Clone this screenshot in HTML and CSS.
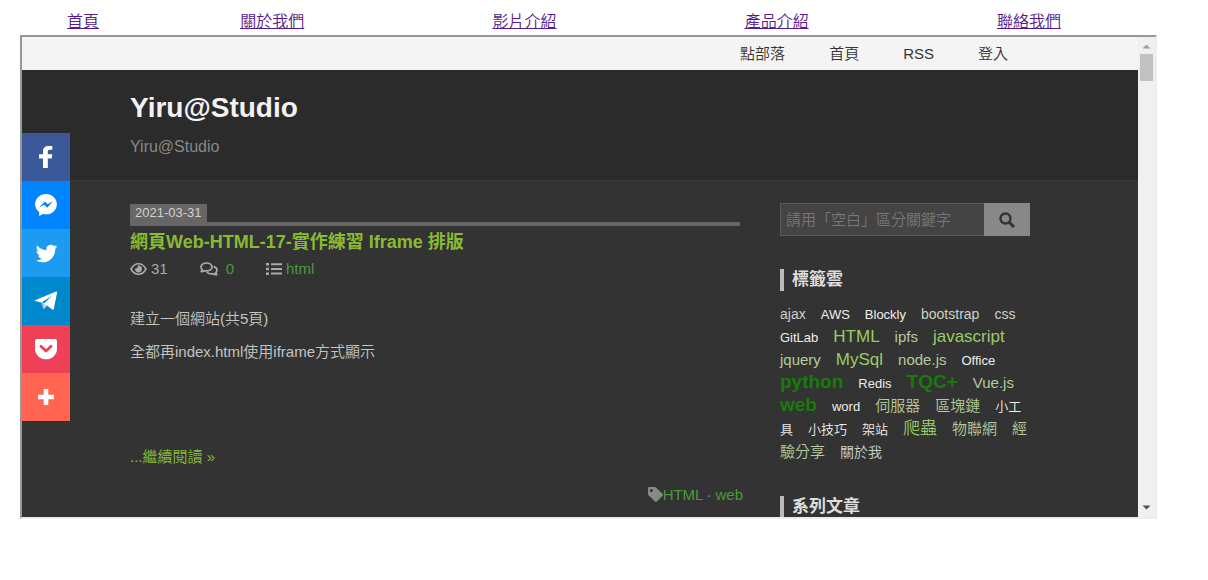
FILE: index.html
```html
<!DOCTYPE html>
<html lang="zh-Hant">
<head>
<meta charset="utf-8">
<meta name="viewport" content="width=device-width, initial-scale=1">
<title>Yiru@Studio</title>
<link rel="stylesheet" href="styles.css">
</head>
<body>
<nav class="site-nav">
  <a href="#">首頁</a>
  <a href="#">關於我們</a>
  <a href="#">影片介紹</a>
  <a href="#">產品介紹</a>
  <a href="#">聯絡我們</a>
</nav>

<div class="frame">
  <div class="page">
    <div class="topbar">
      <nav class="container topbar-links">
        <a href="#">點部落</a>
        <a href="#">首頁</a>
        <a href="#">RSS</a>
        <a href="#">登入</a>
      </nav>
    </div>

    <header class="banner">
      <div class="container">
        <h1 class="banner-title"><a href="#">Yiru@Studio</a></h1>
        <p class="banner-tagline">Yiru@Studio</p>
      </div>
    </header>

    <div class="container columns">
      <article class="post">
        <div class="post-date"><time datetime="2021-03-31">2021-03-31</time></div>
        <h2 class="post-title"><a href="#">網頁Web-HTML-17-實作練習 Iframe 排版</a></h2>
        <div class="post-meta">
          <span class="meta-item">
            <svg width="17" height="14" viewBox="0 0 17 14" fill="none" stroke="currentColor" stroke-width="1.600"><path d="M1 7C3 3.300 5.500 1.700 8.500 1.700S14 3.300 16 7C14 10.700 11.500 12.300 8.500 12.300S3 10.700 1 7z"/><path d="M8.500 3.500a3.500 3.500 0 1 1-3.400 2.700c.8.500 1.900.3 2.300-.4.400-.7.300-1.500-.1-2.100z" fill="currentColor" stroke="none"/></svg>
            31
          </span>
          <span class="meta-item meta-comments">
            <svg width="18" height="14" viewBox="0 0 18 14" fill="none" stroke="currentColor" stroke-width="1.700" stroke-linejoin="round"><path d="M6.500 1C3.400 1 1 2.600 1 4.900c0 1 .5 1.900 1.200 2.600L1.200 9.600c1.300 0 2.500-.4 3.300-1 .6.100 1.300.2 2 .2 3.100 0 5.500-1.600 5.500-3.900S9.600 1 6.500 1z"/><path d="M13.500 4.600c2.100.5 3.500 1.800 3.500 3.400 0 1-.5 1.900-1.200 2.600l1 2.100c-1.300 0-2.500-.4-3.300-1-.6.100-1.300.2-2 .2-2 0-3.700-.7-4.700-1.800"/></svg>
            <a href="#">0</a>
          </span>
          <span class="meta-item">
            <svg width="16" height="14" viewBox="0 0 16 14" fill="currentColor"><path d="M0 1h3v2.500H0zM0 5.700h3v2.500H0zM0 10.400h3v2.500H0zM5 1.200h11v2H5zM5 5.900h11v2H5zM5 10.600h11v2H5z"/></svg>
            <a href="#">html</a>
          </span>
        </div>
        <div class="post-body">
          <p>建立一個網站(共5頁)</p>
          <p>全都再index.html使用iframe方式顯示</p>
        </div>
        <a class="read-more" href="#">...繼續閱讀 »</a>
        <div class="post-tags">
          <svg width="15" height="15" viewBox="0 0 15 15" fill="currentColor"><path fill-rule="evenodd" d="M0 1.400C0 .6.600 0 1.400 0h5.400c.5 0 .9.200 1.200.5l6.500 6.300c.6.600.6 1.400 0 2l-5.600 5.700c-.6.600-1.400.6-2 0L.5 8.200C.2 7.900 0 7.500 0 7zM3.400 2a1.500 1.500 0 1 0 0 3 1.500 1.500 0 0 0 0-3z"/></svg>
          <a href="#">HTML</a><span class="dot">·</span><a href="#">web</a>
        </div>
      </article>

      <aside class="sidebar">
        <form class="search">
          <input class="search-input" type="text" aria-label="搜尋" placeholder="請用「空白」區分關鍵字">
          <button class="search-button" type="button" aria-label="搜尋">
            <svg width="16" height="16" viewBox="0 0 16 16" fill="none" stroke="currentColor"><circle cx="6.500" cy="6.500" r="5" stroke-width="2.400"/><path d="M10.300 10.300 15 15" stroke-width="3"/></svg>
          </button>
        </form>
        <h3 class="side-title">標籤雲</h3>
        <div class="cloud">
          <a class="t2" href="#">ajax</a><a class="t1" href="#">AWS</a><a class="t1" href="#">Blockly</a><a class="t2" href="#">bootstrap</a><a class="t2" href="#">css</a><wbr><a class="t1" href="#">GitLab</a><a class="t4" href="#">HTML</a><a class="t3" href="#">ipfs</a><a class="t4" href="#">javascript</a><wbr><a class="t3" href="#">jquery</a><a class="t4" href="#">MySql</a><a class="t3" href="#">node.js</a><a class="t1" href="#">Office</a><wbr><a class="t5" href="#">python</a><a class="t1" href="#">Redis</a><a class="t5" href="#">TQC+</a><a class="t3" href="#">Vue.js</a><wbr><a class="t5" href="#">web</a><a class="t1" href="#">word</a><a class="t3" href="#">伺服器</a><a class="t3" href="#">區塊鏈</a><a class="t1" href="#">小工具</a><a class="t1" href="#">小技巧</a><a class="t1" href="#">架站</a><a class="t4" href="#">爬蟲</a><a class="t3" href="#">物聯網</a><a class="t3" href="#">經驗分享</a><a class="t2" href="#">關於我</a>
        </div>
        <h3 class="side-title">系列文章</h3>
      </aside>
    </div>
  </div>

  <div class="scrollbar" aria-hidden="true">
    <svg class="scroll-arrow" width="9" height="5" viewBox="0 0 9 5" fill="#a0a0a0"><path d="M0.500 4.500 4.500 0.500 8.500 4.500z"/></svg>
    <div class="scroll-track"><div class="scroll-thumb"></div></div>
    <svg class="scroll-arrow" width="9" height="5" viewBox="0 0 9 5" fill="#505050"><path d="M0.500 0.500 4.500 4.500 8.500 0.500z"/></svg>
  </div>

  <div class="share">
    <a class="facebook" href="#" aria-label="Facebook"><svg width="32" height="32" viewBox="0 0 32 32" fill="#fff"><path d="M17.800 27V17.400h3.900l.6-4.200h-4.500v-2.400c0-1.300.6-2 2-2h2.500V5h-3.600c-3.700 0-5.700 2-5.700 5.300v2.900H9v4.200h4V27z"/></svg></a>
    <a class="messenger" href="#" aria-label="Messenger"><svg width="32" height="32" viewBox="0 0 32 32" fill="#fff"><path d="M16 5C9.986 5 5.110 9.560 5.110 15.182c0 3.200 1.580 6.054 4.046 7.920V27l3.716-2.060c.99.276 2.040.425 3.128.425 6.014 0 10.890-4.560 10.890-10.183S22.013 5 16 5zm1.147 13.655L14.330 15.730l-5.423 3 5.946-6.310 2.816 2.925 5.420-3-5.940 6.310z"/></svg></a>
    <a class="twitter" href="#" aria-label="Twitter"><svg width="29" height="29" viewBox="0 0 32 32" fill="#fff"><path d="M28 8.557a9.913 9.913 0 0 1-2.828.775 4.930 4.930 0 0 0 2.166-2.725 9.738 9.738 0 0 1-3.130 1.194 4.920 4.920 0 0 0-3.593-1.550 4.924 4.924 0 0 0-4.794 6.049c-4.090-.21-7.720-2.170-10.150-5.150a4.942 4.942 0 0 0-.665 2.477c0 1.710.87 3.214 2.190 4.100a4.968 4.968 0 0 1-2.230-.616v.06c0 2.390 1.700 4.380 3.952 4.830-.414.115-.85.174-1.297.174-.318 0-.626-.03-.928-.086a4.935 4.935 0 0 0 4.600 3.420 9.893 9.893 0 0 1-6.114 2.107c-.398 0-.79-.023-1.175-.068a13.953 13.953 0 0 0 7.550 2.213c9.056 0 14.010-7.507 14.010-14.013 0-.213-.005-.426-.015-.637.96-.695 1.795-1.560 2.455-2.550z"/></svg></a>
    <a class="telegram" href="#" aria-label="Telegram"><svg width="32" height="32" viewBox="0 0 32 32"><path fill="#a9c9dd" d="M11 16.500 13.500 24.300 18 20z"/><path fill="#c8daea" d="M13.500 24.300 14.200 18.500 23 10z"/><path fill="#fff" d="M5 15.300 26.200 6.600c.6-.2 1 .1.900.8L23.800 24c-.2.900-.8 1.100-1.500.6L14.200 18.500 22.500 10.500 11.500 17.400 5 15.900c-.5-.1-.5-.4 0-.6z"/></svg></a>
    <a class="pocket" href="#" aria-label="Pocket"><svg width="32" height="32" viewBox="0 0 32 32"><path fill="#fff" d="M7 6h18a2 2 0 0 1 2 2v7.500a11 10.800 0 0 1-22 0V8a2 2 0 0 1 2-2z"/><path fill="none" stroke="#ee4056" stroke-width="2.800" stroke-linecap="round" stroke-linejoin="round" d="M11 13.200 16 18l5-4.800"/></svg></a>
    <a class="more" href="#" aria-label="更多"><svg width="32" height="32" viewBox="0 0 32 32" fill="#fff"><path d="M13.700 8h4.600v5.700H24v4.600h-5.700V24h-4.600v-5.700H8v-4.600h5.700z"/></svg></a>
  </div>
</div>
</body>
</html>
```

FILE: styles.css
```css
* { box-sizing: border-box; }

body {
  margin: 0;
  padding: 8px 51px 0 20px;
  background: #fff;
  font-family: "Liberation Sans", "Noto Sans CJK TC", sans-serif;
  font-weight: 350;
}

h1, h2, h3, p { margin: 0; }
a { text-decoration: none; color: inherit; }
svg { flex: none; }

.site-nav {
  display: grid;
  grid-template-columns: 1fr 2fr 2fr 2fr 2fr;
  justify-items: center;
  margin-right: 2px;
  line-height: 27px;
  font-size: 16px;
}
.site-nav a { color: #551a8b; text-decoration: underline; }

.frame {
  position: relative;
  display: flex;
  height: calc(100vh - 96px);
  min-height: 300px;
  border: 2px solid;
  border-color: #979797 #ededed #ededed #979797;
  overflow: hidden;
}

.page {
  flex: 1;
  min-width: 0;
  overflow: hidden;
  background: #333;
  color: #bbb;
  font-size: 15px;
}
.container { max-width: 900px; margin: 0 auto; }

.topbar { background: #f4f4f4; }
.topbar-links {
  display: flex;
  justify-content: flex-end;
  line-height: 33px;
  color: #333;
}
.topbar-links a { padding: 0 22px; }

.banner {
  padding: 20px 0 21px;
  background: #2b2b2b;
  border-bottom: 1px solid #383838;
}
.banner-title {
  font-size: 28px;
  font-weight: 700;
  line-height: 36px;
  color: #f2f2f2;
}
.banner-tagline {
  margin-top: 8px;
  font-size: 16px;
  line-height: 25px;
  color: #888;
}

.columns {
  display: grid;
  grid-template-columns: 1fr 250px;
  gap: 40px;
  padding-top: 22px;
}

.post-date {
  margin-top: 1px;
  border-bottom: 4px solid #666;
  line-height: 18px;
  font-size: 13px;
}
.post-date time {
  display: block;
  width: fit-content;
  padding: 0 5px;
  background: #666;
  color: #d0d0d0;
}
.post-title {
  margin-top: 3px;
  font-size: 18px;
  font-weight: 700;
  line-height: 26px;
  color: #8b3;
}
.post-meta {
  display: flex;
  gap: 32px;
  margin-top: 2px;
  line-height: 24px;
  color: #aaa;
}
.meta-item { display: flex; align-items: center; gap: 4px; }
.meta-comments { gap: 8px; }
.meta-item a, .post-tags a { color: #4a9a3a; }
.post-body { margin-top: 26px; color: #c4c4c4; }
.post-body p { margin-bottom: 10px; line-height: 23px; }
.read-more {
  display: block;
  margin-top: 82px;
  line-height: 23px;
  color: #8b3;
}
.post-tags {
  display: flex;
  justify-content: flex-end;
  align-items: center;
  margin: 15px -3px 0 0;
  line-height: 23px;
  color: #888;
}
.dot { padding: 0 4px 0 3px; }

.search { display: flex; height: 33px; }
.search-input {
  flex: 1;
  min-width: 0;
  padding: 0 5px;
  border: 1px solid #5c5c5c;
  border-right: 0;
  border-radius: 0;
  background: #444;
  color: #ddd;
  font: inherit;
}
.search-input::placeholder { color: #787878; opacity: 1; }
.search-button {
  display: flex;
  align-items: center;
  justify-content: center;
  width: 46px;
  padding: 0;
  border: 0;
  background: #888;
  color: #333;
}

.side-title {
  margin-top: 33px;
  padding-left: 8px;
  border-left: 4px solid #bbb;
  font-size: 17px;
  font-weight: 700;
  line-height: 22px;
  color: #ddd;
}
.cloud { margin: 11px -10px 0 0; line-height: 23px; }
.cloud a { margin-right: 15px; line-height: 1; }
.cloud + .side-title { margin-top: 33px; }
.t1 { font-size: 13px; color: #eee; }
.t2 { font-size: 14px; color: #ccd0c6; }
.t3 { font-size: 15px; color: #b4cc9c; }
.t4 { font-size: 17px; color: #9c6; }
.t5 { font-size: 19px; font-weight: 700; color: #187c08; }

.scrollbar {
  display: flex;
  flex-direction: column;
  align-items: center;
  width: 17px;
  padding: 7px 0;
  background: #f0f0f0;
}
.scroll-track { flex: 1; padding: 5px 0; }
.scroll-thumb { width: 13px; height: 27px; background: #c1c1c1; }

.share {
  position: absolute;
  top: 96px;
  left: 0;
  width: 48px;
}
.share a {
  display: flex;
  align-items: center;
  justify-content: center;
  height: 48px;
}
.facebook { background: #3b5998; }
.messenger { background: #0084ff; }
.twitter { background: #1d9bf0; }
.telegram { background: #0088cc; }
.pocket { background: #ee4056; }
.more { background: #ff6550; }
```
